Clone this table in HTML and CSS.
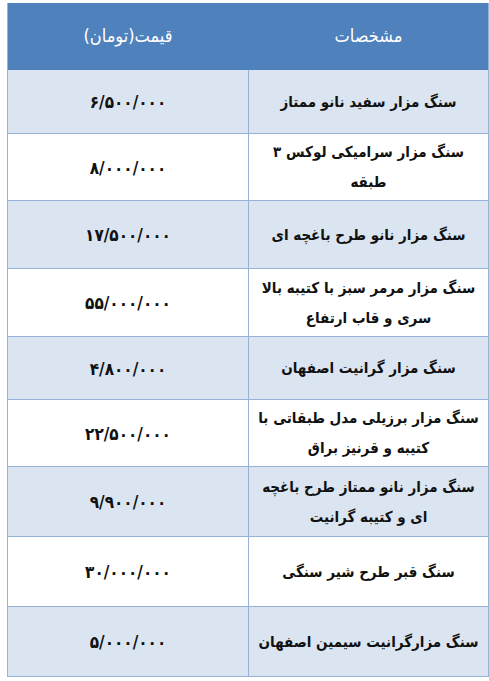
FILE: index.html
```html
<!DOCTYPE html>
<html lang="fa" dir="rtl">
<head>
<meta charset="utf-8">
<title>قیمت سنگ مزار</title>
<link rel="stylesheet" href="styles.css">
</head>
<body>
<div class="table">
  <div class="row head h67">
    <div class="cell desc">مشخصات</div>
    <div class="cell price">قیمت(تومان)</div>
  </div>
  <div class="row alt h64">
    <div class="cell desc">سنگ مزار سفید نانو ممتاز</div>
    <div class="cell price">۶/۵۰۰/۰۰۰</div>
  </div>
  <div class="row h67">
    <div class="cell desc">سنگ مزار سرامیکی لوکس ۳<br>طبقه</div>
    <div class="cell price">۸/۰۰۰/۰۰۰</div>
  </div>
  <div class="row alt h68">
    <div class="cell desc">سنگ مزار نانو طرح باغچه ای</div>
    <div class="cell price">۱۷/۵۰۰/۰۰۰</div>
  </div>
  <div class="row h68">
    <div class="cell desc">سنگ مزار مرمر سبز با کتیبه بالا<br>سری و قاب ارتفاع</div>
    <div class="cell price">۵۵/۰۰۰/۰۰۰</div>
  </div>
  <div class="row alt h63">
    <div class="cell desc">سنگ مزار گرانیت اصفهان</div>
    <div class="cell price">۴/۸۰۰/۰۰۰</div>
  </div>
  <div class="row h67">
    <div class="cell desc">سنگ مزار برزیلی مدل طبقاتی با<br>کتیبه و قرنیز براق</div>
    <div class="cell price">۲۲/۵۰۰/۰۰۰</div>
  </div>
  <div class="row alt h70">
    <div class="cell desc">سنگ مزار نانو ممتاز طرح باغچه<br>ای و کتیبه گرانیت</div>
    <div class="cell price">۹/۹۰۰/۰۰۰</div>
  </div>
  <div class="row h70">
    <div class="cell desc">سنگ قبر طرح شیر سنگی</div>
    <div class="cell price">۳۰/۰۰۰/۰۰۰</div>
  </div>
  <div class="row alt h70">
    <div class="cell desc">سنگ مزارگرانیت سیمین اصفهان</div>
    <div class="cell price">۵/۰۰۰/۰۰۰</div>
  </div>
</div>
</body>
</html>
```
FILE: styles.css
```css
html, body {
  margin: 0;
  padding: 0;
  background: #ffffff;
}
body {
  padding: 3px 0 0 1px;
  font-family: "DejaVu Sans Condensed", "DejaVu Sans", sans-serif;
  font-weight: bold;
  font-size: 15px;
  color: #111111;
}
.table {
  width: 482px;
  box-sizing: border-box;
  border-left: 1px solid #95b3d7;
  border-right: 1px solid #95b3d7;
}
.row {
  display: grid;
  grid-template-columns: minmax(0, 1fr) minmax(0, 1fr);
  box-sizing: border-box;
  border-bottom: 1px solid #95b3d7;
  background: #ffffff;
}
.row.alt { background: #dbe5f1; }
.row.head {
  background: #4f81bd;
  color: #ffffff;
  border-bottom-color: #4f81bd;
  font-weight: normal;
}
.cell {
  display: flex;
  align-items: center;
  justify-content: center;
  text-align: center;
  line-height: 30px;
  white-space: nowrap;
}
.cell.desc { border-left: 1px solid #95b3d7; }
.row.head .cell.desc { border-left-color: #4f81bd; }
.cell.price { padding-top: 1px; font-size: 17px; }
.row.head .cell { font-size: 18px; padding-top: 0; }
.h63 { height: 63px; }
.h64 { height: 64px; }
.h67 { height: 67px; }
.h68 { height: 68px; }
.h70 { height: 70px; }
```
